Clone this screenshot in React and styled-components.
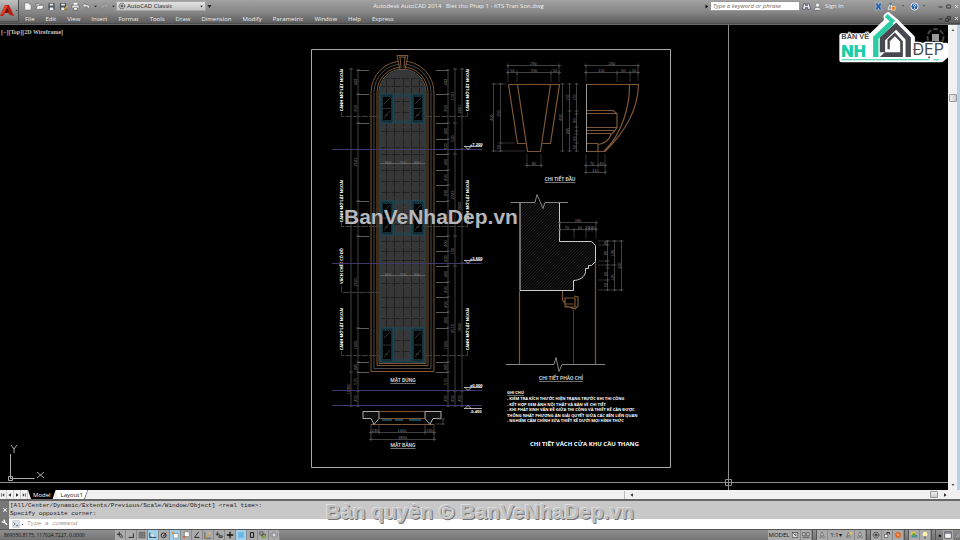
import React from "react";
import styled, { createGlobalStyle } from "styled-components";

const GlobalStyle = createGlobalStyle`
  *, *::before, *::after { box-sizing: border-box; }
  body { margin: 0; background: #000; }
  button, input, select { font: inherit; color: inherit; margin: 0; padding: 0; border: 0; background: none; }
`;

const UI = `"Open Sans", "Noto Sans", sans-serif`;

const Window = styled.div`
  position: relative;
  display: flex;
  flex-direction: column;
  min-height: 100vh;
  font: 6px/8px ${UI};
  color: #eee;
`;

/* ---------- header ---------- */
const Header = styled.header`
  display: flex;
  height: 25px;
  background: linear-gradient(#a2a2a2, #858585 50%, #5c5c5c 92%, #4b4b4b 94%, #777);
`;
const AppButton = styled.button`
  display: flex;
  align-items: center;
  width: 19px;
  height: 22px;
  background: linear-gradient(#c0c0c0, #707070);
  border: 1px solid #4c4c4c;
  border-width: 0 1px 1px 0;
`;
const HeaderRows = styled.div`
  flex: 1;
  display: flex;
  flex-direction: column;
`;
const TitleRow = styled.div`
  display: flex;
  align-items: center;
  height: 12px;
`;
const Group = styled.div`
  display: flex;
  align-items: center;
  padding: 0 ${(p) => p.$end || 0}px 0 ${(p) => p.$start || 0}px;
`;
const ToolButton = styled.button`
  display: grid;
  place-items: center;
  width: ${(p) => p.$w || 10}px;
  height: 10px;
`;
const Workspace = styled.label`
  display: flex;
  align-items: center;
  width: 90px;
  height: 10px;
  padding-left: 1px;
  color: #222;
  background: linear-gradient(#e2e2e2, #c4c4c4);
  border: 1px solid #a5a5a5;
`;
const WorkspaceSelect = styled.select`
  flex: 1;
  appearance: none;
  padding-left: 1px;
  line-height: 8px;
`;
const Title = styled.h1`
  flex: 1;
  margin: 0;
  font-size: 6px;
  font-weight: 400;
  line-height: 8px;
  text-align: center;
  white-space: pre;
`;
const Search = styled.input`
  width: 90px;
  height: 10px;
  padding: 0 2px;
  color: #555;
  font-style: italic;
  background: #fff;
  border: 1px solid #999;
  &::placeholder { color: #666; opacity: 1; }
`;
const SignIn = styled.button`
  width: 49px;
  text-align: left;
  padding-left: 2px;
`;
const MenuRow = styled.nav`
  display: flex;
  align-items: center;
  height: 13px;
`;
const MenuButton = styled.button`
  padding: 0 5px 0 6px;
`;
const WindowButtons = styled.div`
  display: flex;
  margin-left: auto;
`;

/* ---------- drawing area ---------- */
const Workarea = styled.main`
  flex: 1;
  display: flex;
  min-height: 0;
`;
const Canvas = styled.section`
  position: relative;
  flex: 1;
  display: flex;
  background: #000;
`;
const Sheet = styled.svg`
  display: block;
  flex: 1;
  width: 100%;
`;
const ViewLabel = styled.div`
  position: absolute;
  left: 0;
  top: 3px;
  display: flex;
  padding-left: 1px;
  color: #c4c4c4;
  font: 6px/8px "Liberation Serif", serif;
  font-weight: 700;
`;
const VScroll = styled.div`
  display: flex;
  flex-direction: column;
  justify-content: space-between;
  align-items: center;
  width: 12px;
  background: #f1f1f1;
  border-right: 3px solid #b9d0e8;
`;
const VThumb = styled.span`
  width: 8px;
  height: 8px;
  margin-top: 59px;
  margin-bottom: auto;
  background: linear-gradient(90deg, #eee, #ccc);
  border: 1px solid #999;
  border-radius: 1px;
`;
const Logo = styled.svg`
  position: absolute;
  top: 11px;
  right: 10px;
  width: 111px;
  height: 53px;
`;

/* ---------- layout tabs ---------- */
const TabBar = styled.div`
  display: flex;
  align-items: center;
  height: 9px;
  color: #222;
  background: #f1f1f1;
`;
const NavButton = styled.button`
  display: grid;
  place-items: center;
  width: 7px;
  height: 9px;
  border-right: 1px solid #ccc;
`;
const Tab = styled.button`
  height: 9px;
  padding: 0 5px;
  color: ${(p) => (p.$active ? "#fff" : "#222")};
  background: ${(p) => (p.$active ? "#000" : "linear-gradient(110deg, #fff 88%, #555 90%)")};
  clip-path: polygon(0 0, 100% 0, calc(100% - 3px) 100%, 3px 100%);
`;
const HScroll = styled.div`
  display: flex;
  align-items: center;
  justify-content: space-between;
  width: 35%;
  height: 8px;
  margin-left: auto;
  padding: 0 12px 0 4px;
  border-left: 1px solid #bbb;
`;
const HThumb = styled.span`
  width: 8px;
  height: 7px;
  margin-left: auto;
  margin-right: 4px;
  background: linear-gradient(#eee, #ccc);
  border: 1px solid #999;
  border-radius: 1px;
`;

/* ---------- command window ---------- */
const Command = styled.section`
  display: flex;
  height: 31px;
  border-top: 2px solid #666;
  border-bottom: 1px solid #555;
  color: #222;
  font: 6px/8px "Liberation Mono", monospace;
`;
const Handle = styled.div`
  display: flex;
  flex-direction: column;
  justify-content: space-around;
  align-items: center;
  width: 9px;
  padding-top: 3px;
  color: #fff;
  background: #777;
`;
const CommandBody = styled.div`
  flex: 1;
  display: flex;
  flex-direction: column;
`;
const History = styled.div`
  flex: 1;
  padding: 1px;
  background: #c8c8c8;
  white-space: pre;
`;
const Prompt = styled.label`
  display: flex;
  align-items: center;
  height: 10px;
  padding-left: 3px;
  background: #fff;
`;
const PromptInput = styled.input`
  flex: 1;
  padding-left: 2px;
  font-style: italic;
  &::placeholder { color: #999; opacity: 1; }
`;
const Notice = styled.p`
  position: absolute;
  left: 0;
  right: 0;
  bottom: 16px;
  margin: 0;
  color: #bebebe;
  font: 700 21px/24px "Liberation Sans", sans-serif;
  text-align: center;
  text-shadow: -1px -1px 0 #dedede, 1px 1px 0 #767676;
  pointer-events: none;
`;

/* ---------- status bar ---------- */
const Status = styled.footer`
  display: flex;
  align-items: center;
  height: 10px;
  padding-left: 4px;
  color: #111;
  background: linear-gradient(#8f8f8f, #747474);
  font-size: 5px;
`;
const Coords = styled.output`
  width: 111px;
  font-weight: 500;
`;
const Toggle = styled.button`
  display: grid;
  place-items: center;
  width: 11px;
  height: 10px;
  border-right: 1px solid #8a8a8a;
  background: ${(p) => (p.$on ? "#9fd0ea" : "#aaa")};
`;
const StatusEnd = styled.div`
  display: flex;
  align-items: center;
  margin-left: auto;
`;
const StatusText = styled.button`
  width: ${(p) => p.$w}px;
  height: 10px;
  font-size: 6px;
  line-height: 10px;
  background: #aaa;
`;
const Gap = styled.span`
  width: 5px;
  height: 10px;
  border: solid #555;
  border-width: 0 1px;
`;

/* ---------- icons ---------- */
const G = { fill: "none", stroke: "currentColor", strokeWidth: 1 };
const SHAPES = {
  page: <path d="M2 1h4l3 3v5H2z" fill="#f4f4f4" stroke="#666" strokeWidth=".6" />,
  open: <><path d="M1 2h3l1 1h3v5H2z" fill="#d9dde0" stroke="#555" strokeWidth=".6" /><path d="M1 8l2-4h7L8 8z" fill="#fafafa" stroke="#556" strokeWidth=".6" /></>,
  save: <><rect x="1.5" y="1" width="7" height="8" rx="1" fill="#48535c" /><path d="M3 2h4v2H3zM3 6h4v3H3z" fill="#eee" /></>,
  saveas: <><rect x="1" y="1" width="7" height="8" rx="1" fill="#48535c" /><path d="M2.5 2h4v2h-4zM2.5 6h3v3h-3z" fill="#eee" /><path d="M5 8l4-4 1 1-4 4z" fill="#e6ac45" /></>,
  print: <><path d="M3 1h4v3H3z" fill="#fff" /><rect x="1" y="3.500" width="8" height="3.500" rx="1" fill="#eee" stroke="#444" strokeWidth=".6" /><path d="M3 6h4v3H3z" fill="#fff" stroke="#444" strokeWidth=".6" /></>,
  undo: <path d="M4 1L1 4l3 3V5c2 0 3 1 3 3 3-3 1-5-3-5z" fill="#e2e5e8" stroke="#555" strokeWidth=".5" />,
  redo: <path d="M6 1l3 3-3 3V5C4 5 3 6 3 8 0 5 2 3 6 3z" fill="#aaa" stroke="#777" strokeWidth=".5" />,
  down: <path d="M3 4h4L5 6z" fill="#222" />,
  bigdown: <path d="M1 2h8L5 8z" fill="#222" />,
  up: <path d="M3 6h4L5 4z" fill="#333" />,
  right: <path d="M3.500 2l4 3-4 3z" fill="#111" />,
  left: <path d="M6.500 2L2.500 5l4 3z" fill="#222" />,
  first: <path d="M7 2L4 5l3 3zM2 2h1v6H2z" fill="#333" />,
  last: <path d="M3 2l3 3-3 3zM7 2h1v6H7z" fill="#333" />,
  gear: <><circle cx="5" cy="5" r="3.500" {...G} strokeDasharray="1.5 .7" /><circle cx="5" cy="5" r="1.300" {...G} /></>,
  binoculars: <path d="M2 2h2v2h2V2h2l1.500 6H6V6H4v2H.5z" fill="#e8ebee" stroke="#334" strokeWidth=".7" />,
  user: <><circle cx="5" cy="3.500" r="2.300" fill="#e8eef2" stroke="#555" strokeWidth=".5" /><path d="M1 9c0-4 8-4 8 0z" fill="#e8eef2" stroke="#555" strokeWidth=".5" /></>,
  exchange: <path d="M1 1h3l1 2 1-2h3L7 5l2 4H6L5 7 4 9H1l2-4z" fill="#2860b0" stroke="#dde7f4" strokeWidth=".5" />,
  a360: <><path d="M1 8l3-6 3 6z" fill="none" stroke="#e9eef2" /><circle cx="4" cy="2" r="1.300" fill="#4673a5" /><rect x="5" y="5" width="4" height="4" fill="#e68422" stroke="#ffe" strokeWidth=".5" /></>,
  help: <><circle cx="5" cy="5" r="4" fill="#2d65a8" stroke="#eef" /><path d="M3.800 4c0-2 2.800-1.500 2.400 0L5 5.500V6M5 7v1" fill="none" stroke="#fff" /></>,
  min: <path d="M1 6h8" stroke="#222" strokeWidth="1.500" />,
  restore: <rect x="1.500" y="2" width="7" height="6" fill="none" stroke="#222" strokeWidth="1.400" />,
  restore2: <path d="M1 4h5v5H1zM4 4V1h5v5H6" fill="none" stroke="#222" strokeWidth="1.200" />,
  close: <path d="M2 2l6 6M8 2L2 8" stroke="currentColor" strokeWidth="1.600" />,
  wrench: <path d="M1 3a2.500 2.500 0 0 0 3.500 2.500L8 9l1.500-1.500-3.500-3A2.500 2.500 0 0 0 3 1l1 2-1 1z" fill="#fff" />,
  prompt: <><rect x="1" y="1" width="8" height="8" fill="#d9e1e8" stroke="#9aa6b0" strokeWidth=".5" /><path d="M2 3l2 2-2 2M5 7h3" {...G} strokeWidth=".7" /></>,
  infer: <><path d="M4 1v6M1 4h6" {...G} /><circle cx="7" cy="7" r="1.300" {...G} strokeWidth=".7" /></>,
  snap: <path d="M2 8h6V3" {...G} />,
  grid: <><rect x="1" y="1" width="8" height="8" fill="#666" /><path d="M1 3h8M1 5h8M1 7h8M3 1v8M5 1v8M7 1v8" stroke="#999" strokeWidth=".4" /></>,
  ortho: <><path d="M1 2v6h8" {...G} /><path d="M2 5h3v3" fill="none" stroke="#fff" /></>,
  polar: <><circle cx="4.500" cy="5.500" r="3" {...G} /><path d="M4 6l4-4M4 6h4" {...G} strokeWidth=".7" /></>,
  osnap: <><path d="M3 3h6v6H3z" fill="#fff" stroke="#555" strokeWidth=".6" /><path d="M1 1h3v3H1z" fill="#e08a35" /></>,
  osnap3: <><path d="M3 1h6v6H3z" fill="#fff" stroke="#555" strokeWidth=".6" /><path d="M1 6h3v3H1z" fill="#cc6a45" /></>,
  angle: <path d="M7 1L2 8h6" {...G} strokeWidth="1" />,
  ducs: <><path d="M1 1v8h8" {...G} strokeWidth=".6" /><path d="M2 8l5-5" stroke="#e59b34" strokeWidth="1.500" /><circle cx="7" cy="3" r="1" fill="#ffd271" /></>,
  dyn: <path d="M3 1v5M1 4h5M5 6h4v2H5z" {...G} strokeWidth=".9" />,
  lwt: <path d="M1 5h8M5 1v8" {...G} strokeWidth="1.600" />,
  tpy: <rect x="1" y="1" width="8" height="8" fill="#6bb7e4" stroke="#eef" strokeWidth=".7" strokeDasharray="1 1" />,
  qp: <path d="M3 2h4v6H3z" {...G} strokeWidth="1.200" />,
  sc: <><path d="M1 1h4v4H1zM4 4h4v4H4z" {...G} strokeWidth=".6" /><circle cx="6.500" cy="7" r="2" fill="#70b934" /></>,
  am: <path d="M4 1h2v3h3v2H6v3H4V6H1V4h3z" fill="#f2f8fb" stroke="#445" strokeWidth=".6" />,
  layout: <><rect x="1.500" y="2" width="7" height="6" fill="#ddd" stroke="#333" strokeWidth=".7" /><path d="M3 3l3 3V3" {...G} strokeWidth=".8" /></>,
  views: <path d="M1 2h3v4H1zM6 2h3v4H6zM1 8h8" fill="#ddd" stroke="#333" strokeWidth=".8" />,
  scale: <path d="M5 1L2 8h2l1-3 1 3h2z" fill="#ddd" stroke="#444" strokeWidth=".7" />,
  scale2: <><path d="M4 2L2 8h1l1-3 1 3h2z" fill="#eee" stroke="#444" strokeWidth=".7" /><circle cx="7.500" cy="3" r="1.700" fill="#f1bd4b" /></>,
  lock: <><path d="M5 4V2h3v2" {...G} /><rect x="2" y="4" width="4" height="4" fill="#eee" stroke="#444" strokeWidth=".7" /></>,
  ball: <><circle cx="5" cy="5" r="3.700" fill="#df6526" /><path d="M3 4l2-1 2 2-2 2z" fill="#ffae69" /></>,
  perf: <><rect x="1" y="1" width="6" height="4" fill="#e5c441" /><rect x="2" y="5" width="7" height="3" fill="#3386b5" /><path d="M3 3h4v4H3z" fill="#5da646" /></>,
  bulb: <><circle cx="5" cy="4" r="3" fill="#ffedb0" /><path d="M4 7h2v2H4z" fill="#555" /></>,
  dot: <rect x="4" y="4" width="3" height="3" fill="#111" />,
  clean: <><rect x="1" y="1" width="8" height="8" fill="#f4f4f4" stroke="#333" strokeWidth=".8" /><path d="M1 2.500h8" stroke="#557" strokeWidth="1.500" /></>,
  grip: <path d="M9 3L3 9M9 6L6 9" stroke="#ccc" strokeWidth="1.200" />,
};
const Glyph = styled.svg`
  display: block;
  flex: none;
  width: ${(p) => p.$size || 9}px;
  height: ${(p) => p.$size || 9}px;
`;
const Icon = ({ name, size }) => (
  <Glyph $size={size} viewBox="0 0 10 10" aria-hidden="true">{SHAPES[name]}</Glyph>
);

/* ---------- drawing primitives ---------- */
const Line = styled.path`
  fill: ${(p) => p.$fill || "none"};
  stroke: ${(p) => p.$c || "#5c5c5c"};
  stroke-width: ${(p) => p.$w || 1};
  stroke-dasharray: ${(p) => p.$dash || "none"};
`;
const BROWN = "#7d5836";
const TEAL = "#1d4857";
const Small = styled.text`
  fill: #808080;
  font: 4px "Liberation Sans", sans-serif;
  text-anchor: middle;
`;
const Note = styled.text`
  fill: #fff;
  font: 700 4px "Open Sans", sans-serif;
  text-anchor: ${(p) => p.$anchor || "start"};
  text-decoration: ${(p) => (p.$under ? "underline" : "none")};
`;
const Caption = styled(Note)`
  fill: #e2e2e2;
  font: 500 5px Roboto, sans-serif;
  text-anchor: middle;
  text-decoration: underline;
`;
const SheetTitle = styled.text`
  fill: #fff;
  font: 700 6px "Open Sans", sans-serif;
`;
const Stamp = styled.text`
  fill: #b4b7bb;
  font: 700 21px "Liberation Sans", sans-serif;
`;

const HDim = ({ y, at, labels = [] }) => (
  <g>
    <Line d={`M${at[0] - 2} ${y}H${at[at.length - 1] + 2}` + at.map((x) => `M${x} ${y - 2}v4`).join("")} $w={0.7} />
    {labels.map((t, i) => <Small key={i} x={(at[i] + at[i + 1]) / 2} y={y - 1}>{t}</Small>)}
  </g>
);
const VDim = ({ x, at, labels = [] }) => (
  <g>
    <Line d={`M${x} ${at[0] - 1}V${at[at.length - 1] + 1}` + at.map((y) => `M${x - 2} ${y}h4`).join("")} $w={0.7} />
    {labels.map((t, i) => {
      const y = (at[i] + at[i + 1]) / 2;
      return <Small key={i} x={x - 1} y={y} transform={`rotate(-90 ${x - 1} ${y})`}>{t}</Small>;
    })}
  </g>
);
const SideNote = ({ x, y, children }) => (
  <Note x={x} y={y} $anchor="middle" transform={`rotate(-90 ${x} ${y})`}>{children}</Note>
);
const Level = ({ y, children, below }) => (
  <g>
    <Line d={`M332 ${y}H482`} $c="#42376a" />
    <Line d={below ? `M464 ${y + 3}h18M465 ${y + 3}l3-3 3 3` : `M464 ${y - 3}h18M465 ${y - 3}l3 3 3-3`} $c="#ddd" $w={0.8} />
    <Note x={470} y={below ? y + 7 : y - 4}>{children}</Note>
  </g>
);
const Casement = ({ x, top, bottom }) => (
  <g>
    <Line d={`M${x} ${top}h12V${bottom}h-12z`} $fill="#142d37" $c={TEAL} />
    <rect x={x + 2} y={top + 3} width="8" height={bottom - top - 6} fill="#030303" />
    <Line d={`M${x + 2} ${(top + bottom) / 2}h8M${x + 3} ${top + 10}l6-6M${x + 3} ${bottom - 5}l6-7M${x + 4} ${bottom - 8}h3`} $c="#3b454a" $w={0.7} />
  </g>
);

const ROWS = [78.5, 86.5, 101.5, 112.5, 131.5, 147.5, 154.5, 170.5, 181.5, 192.5, 213.5, 224.5, 241.5, 251.5, 260.5, 283.5, 297.5, 307.5, 318.5, 340.5, 351.5];
const MULLIONS = [386.5, 394.5, 403.5, 411.5, 419.5];
const TICKS = [70, 94, 123, 139, 154, 170, 185, 201, 236, 251, 266, 282, 297, 312, 328, 362];
const MAJOR = [70, 94, 123, 201, 236, 328, 362, 372, 391, 406];
const ARCHES = [
  [371, 434, 61, 371.5, BROWN],
  [374, 431, 64, 368.5, "#4b4b4b"],
  [377, 428, 67, 365.5, BROWN],
  [379, 426, 69, 363.5, BROWN],
];
const arch = (l, r, t, b) => {
  const rad = (r - l) / 2;
  return `M${l} ${b}V${t + rad}A${rad} ${rad} 0 0 1 ${r} ${t + rad}V${b}z`;
};

const Elevation = () => (
  <g>
    <path d={arch(380, 425, 70, 362)} fill="#373737" />
    <Line d={ROWS.map((y) => `M381 ${y}h43`).join("") + MULLIONS.map((x) => `M${x} 78V362`).join("")} $c="#202020" $dash="9 1" $w={0.9} />
    {ARCHES.map(([l, r, t, b, c]) => <Line key={l} d={arch(l, r, t, b)} $c={c} />)}
    <Line d={arch(380, 425, 70, 362)} $c={TEAL} $w={0.8} />
    <path d="M397 55h11l-3 14h-5z" fill="#000" />
    <Line d="M397 55.500h11l-3 14h-5zM399 57h7M400 57l1 11M405 57l-1 11" $c={BROWN} />
    {[[94, 123], [201, 235], [328, 362]].map(([t, b]) => (
      <g key={t}>
        <Line d={`M380 ${t}h45M380 ${b}h45M394 ${t + 2}h16V${b - 2}h-16z`} $c={TEAL} />
        <Casement x={381} top={t} bottom={b} />
        <Casement x={412} top={t} bottom={b} />
      </g>
    ))}
    {[163.5, 275.5].map((y) => (
      <g key={y}>
        <Line d={`M380 ${y}h45`} $c="#606060" />
        <Small x="388" y={y}>350</Small><Small x="403" y={y}>720</Small><Small x="417" y={y}>350</Small>
      </g>
    ))}
    <VDim x={351} at={[69, 372, 406]} labels={["", "10200"]} />
    <VDim x={358} at={MAJOR} labels={["442", "954", "2543", "1000", "2505", "1000", "245", "575", "450"]} />
    <VDim x={448} at={[...TICKS, 372, 391, 406]} labels={["442", "954", "400", "400", "400", "400", "430", "1000", "400", "400", "400", "400", "400", "400", "1000", "245", "575", "450"]} />
    <VDim x={455} at={[69, 123, 154, 236, 266, 391, 406]} labels={["1701", "500", "2743", "150", "2515", "450"]} />
    <VDim x={462} at={[69, 149, 263, 391, 406]} labels={["2401", "3600", "3600", "450"]} />
    <Line d={TICKS.map((y) => `M436 ${y}.5h12`).join("") + MAJOR.slice(0, 7).map((y) => `M357 ${y}.5h12`).join("") + "M357 372.500h12M436 372.500h12"} />
    <Line d="M341.500 112v4.500h38M425 116.500h42.500v-4M341.500 222v4.500h38M425 226.500h42.500v-4M341.500 286v6.500h38M341.500 351v4.500h38M425 355.500h42.500v-5" $c="#3d3d3d" $dash="7 1" />
    {[90, 201, 329].map((y) => (
      <g key={y}>
        <SideNote x={343} y={y}>CÁNH MỞ LẬT NGOÀI</SideNote>
        <SideNote x={469} y={y}>CÁNH MỞ LẬT NGOÀI</SideNote>
      </g>
    ))}
    <SideNote x={343} y={266}>VÁCH CHẾT CÓ ĐỒ</SideNote>
    <Level y={149.500}>+7.200</Level>
    <Level y={263.500}>+3.600</Level>
    <Level y={390.500}>±0.000</Level>
    <Level y={405.500} below>-0.450</Level>
    <Caption x="403" y="382">MẶT ĐỨNG</Caption>
  </g>
);

const Plan = () => (
  <g>
    <Line d="M379 411.500h46M379 418.500h46M371 424.500h63" $c={BROWN} />
    <Line d="M382 420h10M395 420h8M409 420h12" $c={TEAL} $w={2} />
    <Line d="M363 411.500h16v7l-5 6-3-6h-8zM441 411.500h-16v7l5 6 3-6h8z" $c="#aaa" $fill="url(#hatch)" />
    <Line d="M371 424v16M379 424v9M425 424v9M434 424v16M443 419v6M436 419h9M436 424h9" $w={0.7} />
    <HDim y={432.500} at={[371, 379, 425, 434]} labels={["245", "1400", "245"]} />
    <HDim y={439.500} at={[371, 434]} labels={["1890"]} />
    <Caption x="403" y="447">MẶT BẰNG</Caption>
  </g>
);

const HeadDetail = () => (
  <g>
    <Line d="M508.500 84.500h51l-9 59h-8M508.500 84.500l9 59h8M517.500 84.500l10 67h13l10-67" $c={BROWN} $w={1.2} />
    <HDim y={65.500} at={[508, 559]} labels={["290"]} />
    <HDim y={72.500} at={[508, 517, 551, 559]} labels={["50", "190", "50"]} />
    <VDim x={493.500} at={[84, 151]} labels={["400"]} />
    <VDim x={500.500} at={[84, 143, 151]} labels={["350", "50"]} />
    <HDim y={165.500} at={[527, 541]} labels={["80"]} />
    <Line d="M508 66v16M559 66v16M517 73v9M551 73v9M494 84h12M501 143h14M494 151h31M527 154v12M541 154v12" $w={0.5} />
    <VDim x={562.500} at={[84, 151]} labels={["400"]} />
    <VDim x={569.500} at={[84, 111, 151]} labels={["155", "245"]} />
    <VDim x={576.500} at={[84, 111, 114, 127, 131, 134, 143, 151]} labels={["155", "", "80", "", "", "60", "50"]} />
    <Line d="M586.500 84.500h52C638 110 625 132 605 151.500h-18.500M629.500 84.500C630 105 622 135 604 151M587 110.500h26l4 3v14l-3 4-3 3c-2 6-7 9-13 10v8M587 113.500h30M587 127.500h30M587 130.500h27M587 133.500h24M587 143.500h11" $c={BROWN} $w={1.2} />
    <Line d="M586.500 84v68" $c="#999" />
    <Line d="M586 66v15M638 66v15M617 73v9M630 73v9M586 154v18M598 154v12M605 154v18" $w={0.5} />
    <HDim y={65.500} at={[586, 638]} labels={["260"]} />
    <HDim y={72.500} at={[586, 617, 630, 638]} labels={["155", "60", "50"]} />
    <HDim y={165.500} at={[586, 598, 605]} labels={["70", "40"]} />
    <HDim y={172.500} at={[586, 605]} labels={["110"]} />
    <Caption x="560" y="181">CHI TIẾT ĐẦU</Caption>
  </g>
);

const MouldingDetail = () => (
  <g>
    <path d="M520 202.500h40v39h32l4 4v16l-4 4h-3v3h-3v3c0 5-6 9-12 9v10h-54z" fill="url(#hatch)" />
    <Line d="M520 202.500V290.500h53.500v-10c6 0 12-4 12-9v-3h3v-3h3l4-4v-16l-4-4H559.500v-39" $c="#ccc" />
    <Line d="M511 202.500h24l2-8 6 14 2-6h23M506 364.500h48l2-7 3 14 3-7h43" $c="#858585" />
    <Line d="M519.500 291v73M595.500 262v102M562.500 291v9l3 4h8M565 298h10v9h-10zM574 296l4 1v9l-3 3-9-3" $c={BROWN} $w={1.2} />
    <Line d="M573.500 310v54" $c={TEAL} />
    <HDim y={222.500} at={[560, 596]} labels={["180"]} />
    <HDim y={229.500} at={[560, 574, 586, 589, 592, 596]} labels={["70", "60", "15", "15", "20"]} />
    <VDim x={607.500} at={[241, 245, 261, 265, 268, 280, 290]} labels={["20", "80", "", "", "60", "50"]} />
    <VDim x={614.500} at={[241, 265, 290]} labels={["120", "125"]} />
    <VDim x={621.500} at={[241, 290]} labels={["245"]} />
    <Line d="M598 241h24M598 245h10M598 261h10M598 265h17M598 280h10M598 290h24M560 223v15M574 230v9M586 230v9M596 223v16" $w={0.5} />
    <Caption x="561" y="380">CHI TIẾT PHÀO CHỈ</Caption>
  </g>
);

const NOTES = [
  "- KIỂM TRA KÍCH THƯỚC HIỆN TRẠNG TRƯỚC KHI THI CÔNG",
  "- KẾT HỢP XEM ẢNH NỘI THẤT VÀ BẢN VẼ CHI TIẾT",
  "- KHI PHÁT SINH VẤN ĐỀ GIỮA THI CÔNG VÀ THIẾT KẾ CẦN ĐƯỢC",
  "THỐNG NHẤT PHƯƠNG ÁN GIẢI QUYẾT GIỮA CÁC BÊN LIÊN QUAN",
  "- NGHIÊM CẤM CHỈNH SỬA THIẾT KẾ DƯỚI MỌI HÌNH THỨC",
];

const Drawing = () => (
  <Sheet viewBox="0 25 948 465" role="img" aria-label="Chi tiết vách cửa khu cầu thang">
    <defs>
      <pattern id="hatch" width="3" height="3" patternUnits="userSpaceOnUse">
        <rect width="3" height="3" fill="#080808" />
        <path d="M0 3L3 0" stroke="#262626" strokeWidth=".6" />
      </pattern>
    </defs>
    <Line d="M311.500 49.500h359v418h-359z" $c="#a8a8a8" />
    <Elevation />
    <Plan />
    <HeadDetail />
    <MouldingDetail />
    <Note x="507" y="394" $under>GHI CHÚ</Note>
    {NOTES.map((t, i) => <Note key={t} x="507" y={400 + i * 5.500}>{t}</Note>)}
    <SheetTitle x="530" y="446">CHI TIẾT VÁCH CỬA KHU CẦU THANG</SheetTitle>
    <Line d="M10.500 454v24.500h24M8.500 476.500h4v4h-4zM11 445l3 4 3-4M14 449v4M37 472l7 6M44 472l-7 6" $c="#aaa" />
    <Line d="M728.500 25v465M0 482.500h948M725.500 479.500h6v6h-6z" $c="#8d8d8d" />
    <circle cx="935.500" cy="37" r="8" fill="none" stroke="#444" strokeWidth="2" strokeDasharray="5 2" />
    <rect x="932" y="34" width="7" height="7" fill="#999" />
    <Stamp x="344" y="224">BanVeNhaDep.vn</Stamp>
  </Sheet>
);

const LogoWord = styled.text`
  fill: ${(p) => p.$c};
  stroke: #fff;
  stroke-width: ${(p) => p.$halo}px;
  stroke-linejoin: round;
  paint-order: stroke;
  font-family: ${(p) => p.$face};
  font-size: ${(p) => p.$size}px;
  font-weight: ${(p) => p.$weight};
`;
const Brand = () => (
  <Logo viewBox="598 33 332 158" aria-label="Bản Vẽ Nhà Đẹp">
    <path d="M605 180V106h88l46-44-2-14 8-6 24 20 50 50v22h100v34l-14 12z" fill="#fff" stroke="#fff" strokeWidth="12" strokeLinejoin="round" />
    <LogoWord x="605" y="118" $c="#484950" $halo={4} $size={22} $weight={700} $face={`"Liberation Sans", sans-serif`}>BẢN VẼ</LogoWord>
    <LogoWord x="605" y="171" $c="#1bcda9" $halo={1} $size={48} $weight={900} $face="Inter, sans-serif">NH</LogoWord>
    <path d="M700 170v-60l51-48 10 11-45 43v54z" fill="#2acda3" />
    <path d="M743 42l23 20-8 9-23-20z" fill="#2acda3" />
    <path d="M720 156v-44l49-45 44 45v58h-16v-52l-28-29-33 31v36z" fill="#484950" />
    <path d="M720 170l15-14h46v-31l-16-17-15 15v24h-7v-29l22-21 24 26v47z" fill="#484950" />
    <LogoWord x="818" y="165" $c="#484950" $halo={8} $size={48} $weight={400} $face="Inter, sans-serif">ĐẸP</LogoWord>
    <path d="M606 178.500h262M880 178.500h18" stroke="#2fc9a4" strokeWidth="3" />
  </Logo>
);

const FILE_TOOLS = [["page", "New", 12], ["open", "Open", 12], ["save", "Save", 12], ["saveas", "Save As", 12], ["print", "Plot", 12], ["undo", "Undo", 11], ["down", "Undo list", 6], ["redo", "Redo", 12], ["down", "Redo list", 6]];
const MENUS = ["File", "Edit", "View", "Insert", "Format", "Tools", "Draw", "Dimension", "Modify", "Parametric", "Window", "Help", "Express"];
const TOGGLES = ["infer", "snap", "grid", "ortho", "polar", "osnap", "osnap3", "angle", "ducs", "dyn", "lwt", "tpy", "qp", "sc", "am"];
const ACTIVE = ["ortho", "osnap", "tpy"];

const Tool = ({ name, label, w, size }) => (
  <ToolButton $w={w} aria-label={label}><Icon name={name} size={size} /></ToolButton>
);
const StatusToggle = ({ name }) => (
  <Toggle aria-label={name} $on={ACTIVE.includes(name)}><Icon name={name} size={8} /></Toggle>
);

export default function App() {
  return (
    <Window>
      <GlobalStyle />
      <Header>
        <AppButton aria-label="Application menu">
          <Glyph $size={14} viewBox="0 0 14 14" aria-hidden="true">
            <path d="M0 12L5 1h4l5 11-4-1-2-2H5l-2 3z" fill="#b81f14" />
            <path d="M0 12L5 1l3 1-4 7z" fill="#e0402a" />
            <path d="M7 4l2 4-4 1z" fill="#6b0d08" />
          </Glyph>
          <Icon name="down" size={5} />
        </AppButton>
        <HeaderRows>
          <TitleRow>
            <Group $start={2} $end={1}>
              {FILE_TOOLS.map(([n, l, w]) => <Tool key={l} name={n} label={l} w={w} size={n === "down" ? 7 : 9} />)}
              <Workspace aria-label="Workspace">
                <Icon name="gear" size={8} />
                <WorkspaceSelect defaultValue="AutoCAD Classic"><option>AutoCAD Classic</option></WorkspaceSelect>
                <Icon name="down" size={7} />
              </Workspace>
              <Tool name="bigdown" label="Customize toolbar" w={7} size={5} />
            </Group>
            <Title>{"Autodesk AutoCAD 2014   Biet thu Phap 1 - KTS Tran Son.dwg"}</Title>
            <Group>
              <Tool name="right" label="Collapse search" w={7} size={7} />
              <Search type="search" aria-label="Search help" placeholder="Type a keyword or phrase" />
              <Tool name="binoculars" label="Search" w={12} />
              <Tool name="user" label="Account" w={11} />
              <SignIn>Sign In</SignIn>
              <Tool name="exchange" label="Exchange apps" w={13} />
              <Tool name="a360" label="Stay connected" w={12} />
              <Tool name="down" label="Connect options" w={11} size={6} />
              <Tool name="help" label="Help center" w={12} />
              <Tool name="down" label="Help options" w={8} size={6} />
              <Group $start={8}>
                <Tool name="min" label="Minimize" w={8} size={5} />
                <Tool name="restore" label="Restore" w={8} size={5} />
                <Tool name="close" label="Close" w={8} size={5} />
              </Group>
            </Group>
          </TitleRow>
          <MenuRow>
            {MENUS.map((m) => <MenuButton key={m}>{m}</MenuButton>)}
            <WindowButtons>
              <Tool name="min" label="Minimize drawing" w={8} size={5} />
              <Tool name="restore2" label="Restore drawing" w={8} size={6} />
              <Tool name="close" label="Close drawing" w={8} size={5} />
            </WindowButtons>
          </MenuRow>
        </HeaderRows>
      </Header>

      <Workarea>
        <Canvas>
          <Drawing />
          <ViewLabel><button>[−]</button><button>[Top]</button><button>[2D Wireframe]</button></ViewLabel>
        </Canvas>
        <VScroll>
          <Tool name="up" label="Scroll up" w={9} size={8} />
          <VThumb />
          <Tool name="down" label="Scroll down" w={9} size={8} />
        </VScroll>
      </Workarea>

      <TabBar>
        {["first", "left", "right", "last"].map((n) => <NavButton key={n} aria-label={n}><Icon name={n} size={6} /></NavButton>)}
        <Tab $active>Model</Tab>
        <Tab>Layout1</Tab>
        <HScroll>
          <Icon name="left" size={6} />
          <HThumb />
          <Icon name="right" size={6} />
        </HScroll>
      </TabBar>

      <Command>
        <Handle><Icon name="close" size={6} /><Icon name="wrench" size={7} /></Handle>
        <CommandBody>
          <History>{"[All/Center/Dynamic/Extents/Previous/Scale/Window/Object] <real time>:\nSpecify opposite corner:"}</History>
          <Prompt>
            <Icon name="prompt" size={8} />
            <Icon name="down" size={5} />
            <PromptInput aria-label="Command" placeholder="Type a command" />
          </Prompt>
        </CommandBody>
      </Command>

      <Status>
        <Coords>869350.8175, 117024.7227, 0.0000</Coords>
        {TOGGLES.map((n) => <StatusToggle key={n} name={n} />)}
        <StatusEnd>
          <StatusText $w={22}>MODEL</StatusText>
          <StatusToggle name="layout" />
          <StatusToggle name="views" />
          <Gap />
          <StatusToggle name="scale" />
          <StatusText $w={16}>1:1▾</StatusText>
          <StatusToggle name="scale2" />
          <StatusToggle name="scale" />
          <Gap />
          <StatusToggle name="gear" />
          <StatusToggle name="lock" />
          <StatusToggle name="ball" />
          <Gap />
          <StatusToggle name="perf" />
          <StatusToggle name="bulb" />
          <Gap />
          <Icon name="dot" size={7} />
          <StatusToggle name="clean" />
          <Icon name="grip" size={6} />
        </StatusEnd>
      </Status>
      <Notice>Bản quyền © BanVeNhaDep.vn</Notice>
      <Brand />
    </Window>
  );
}
